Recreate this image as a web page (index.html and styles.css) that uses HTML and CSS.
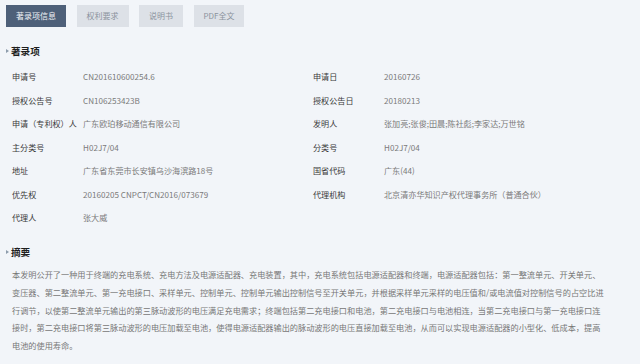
FILE: index.html
```html
<!DOCTYPE html>
<html lang="zh-CN">
<head>
<meta charset="utf-8">
<title>著录项信息</title>
<link rel="stylesheet" href="styles.css">
</head>
<body>
<nav class="tabs">
  <span class="tab active">著录项信息</span>
  <span class="tab">权利要求</span>
  <span class="tab">说明书</span>
  <span class="tab">PDF全文</span>
</nav>
<section class="sec">
  <h2 class="sec-title">著录项</h2>
  <div class="grid">
    <div class="item"><span class="lbl">申请号</span><span class="val">CN201610600254.6</span></div>
    <div class="item"><span class="lbl">申请日</span><span class="val">20160726</span></div>
    <div class="item"><span class="lbl">授权公告号</span><span class="val">CN106253423B</span></div>
    <div class="item"><span class="lbl">授权公告日</span><span class="val">20180213</span></div>
    <div class="item"><span class="lbl">申请（专利权）人</span><span class="val">广东欧珀移动通信有限公司</span></div>
    <div class="item"><span class="lbl">发明人</span><span class="val">张加亮;张俊;田晨;陈社彪;李家达;万世铭</span></div>
    <div class="item"><span class="lbl">主分类号</span><span class="val">H02J7/04</span></div>
    <div class="item"><span class="lbl">分类号</span><span class="val">H02J7/04</span></div>
    <div class="item"><span class="lbl">地址</span><span class="val">广东省东莞市长安镇乌沙海滨路18号</span></div>
    <div class="item"><span class="lbl">国省代码</span><span class="val">广东(44)</span></div>
    <div class="item"><span class="lbl">优先权</span><span class="val">20160205 CNPCT/CN2016/073679</span></div>
    <div class="item"><span class="lbl">代理机构</span><span class="val">北京清亦华知识产权代理事务所（普通合伙）</span></div>
    <div class="item"><span class="lbl">代理人</span><span class="val">张大威</span></div>
  </div>
</section>
<section class="sec abstract">
  <h2 class="sec-title">摘要</h2>
  <p class="abs-text">本发明公开了一种用于终端的充电系统、充电方法及电源适配器、充电装置，其中，充电系统包括电源适配器和终端，电源适配器包括：第一整流单元、开关单元、变压器、第二整流单元、第一充电接口、采样单元、控制单元、控制单元输出控制信号至开关单元，并根据采样单元采样的电压值和/或电流值对控制信号的占空比进行调节，以使第二整流单元输出的第三脉动波形的电压满足充电需求；终端包括第二充电接口和电池，第二充电接口与电池相连，当第二充电接口与第一充电接口连接时，第二充电接口将第三脉动波形的电压加载至电池，使得电源适配器输出的脉动波形的电压直接加载至电池，从而可以实现电源适配器的小型化、低成本，提高电池的使用寿命。</p>
</section>
</body>
</html>
```
FILE: styles.css
```css
html, body {
  margin: 0;
  padding: 0;
  background: #f2f5f9;
}
body {
  padding: 5px 6px 0 6px;
  font-family: "Noto Sans CJK SC", "Noto Sans", sans-serif;
  color: #333;
}
.tabs {
  display: flex;
  gap: 10.5px;
}
.tab {
  height: 22px;
  line-height: 22px;
  padding: 0 10px;
  font-size: 8px;
  background: #dde1e7;
  color: #8b939d;
}
.tab.active {
  background: #4e6079;
  color: #eef1f5;
}
.sec-title {
  margin: 17px 0 0 0;
  height: 14px;
  line-height: 14px;
  font-size: 9.6px;
  font-weight: 700;
  color: #1f1f1f;
  display: flex;
  align-items: center;
  gap: 2px;
}
.sec-title::before {
  content: "";
  width: 0;
  height: 0;
  border-top: 2.5px solid transparent;
  border-bottom: 2.5px solid transparent;
  border-left: 3.5px solid #8d9cac;
}
.grid {
  margin: 6.75px 0 0 6px;
  display: grid;
  grid-template-columns: 301px 1fr;
  grid-auto-rows: 23.5px;
}
.item {
  display: flex;
  align-items: center;
  font-size: 8.1px;
}
.lbl {
  width: 71px;
  flex: none;
  color: #3a3a3a;
  white-space: nowrap;
}
.val {
  color: #7a7a7a;
  white-space: nowrap;
}
.abstract .sec-title {
  margin-top: 15.75px;
}
.abs-text {
  margin: 7px 0 0 6px;
  width: 592px;
  font-size: 8.18px;
  line-height: 17.8px;
  color: #777;
}
```
